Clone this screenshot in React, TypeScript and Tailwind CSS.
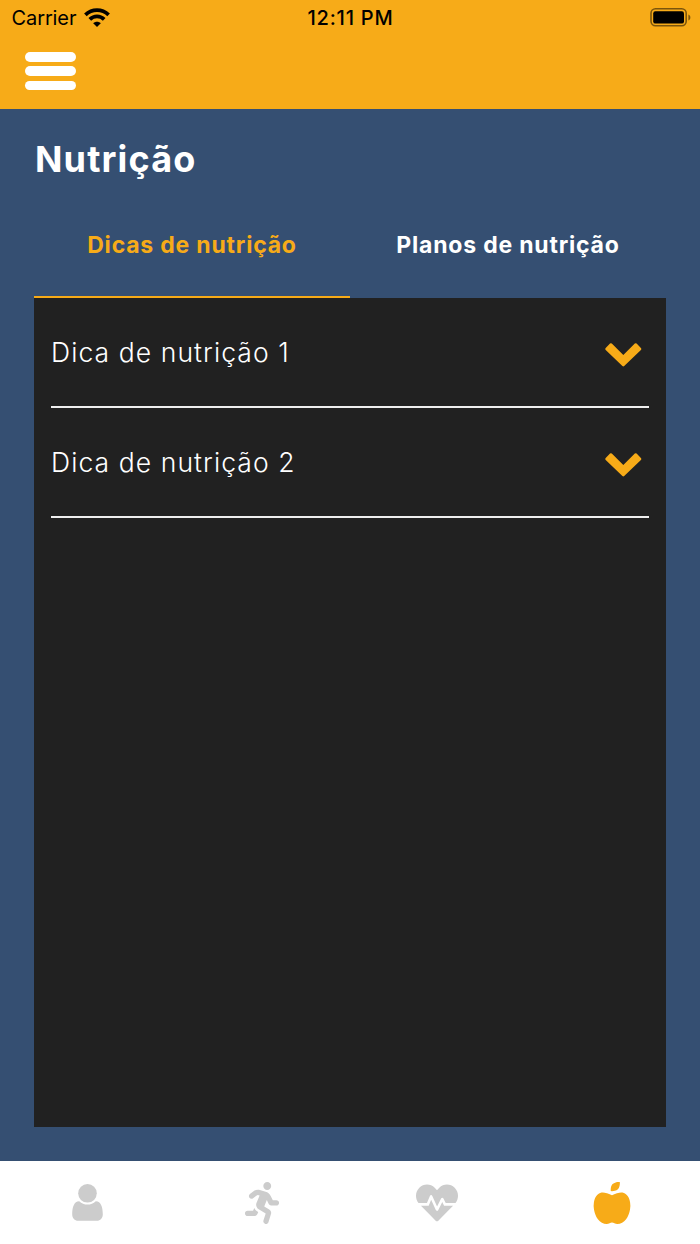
import { useState } from 'react';
import { FaAppleAlt, FaHeartbeat, FaRunning } from 'react-icons/fa';

const TABS = ['Dicas de nutrição', 'Planos de nutrição'];
const TIPS = ['Dica de nutrição 1', 'Dica de nutrição 2'];

function WifiIcon() {
  return (
    <svg width="26" height="20" viewBox="0 0 26 20" fill="none" stroke="black" strokeWidth="3.8">
      <path d="M1.4 6.8C8 .6 18 .6 24.6 6.8" />
      <path d="M5.8 11.4c4.2-4 10.2-4 14.4 0" />
      <path d="M13 19 9.2 15.2c2.2-2 5.4-2 7.6 0z" fill="black" stroke="none" />
    </svg>
  );
}

function BatteryIcon() {
  return (
    <svg width="42" height="20" viewBox="0 0 42 20">
      <rect x="1" y="0.8" width="35.2" height="17" rx="4.5" fill="none" stroke="black" strokeOpacity="0.5" strokeWidth="1.6" />
      <rect x="3.2" y="3.2" width="30.8" height="12.4" rx="2.2" fill="black" />
      <path d="M38.4 6.4c2.6 1 2.6 5 0 6z" fill="black" fillOpacity="0.5" />
    </svg>
  );
}

function ChevronIcon() {
  return (
    <svg width="37" height="24" viewBox="0 0 37 24" fill="#f7ab18">
      <path d="M17.4 23.1.7 6.9a1.3 1.3 0 0 1 0-1.8L5 .6a1.3 1.3 0 0 1 1.8 0L18.3 11.9 29.8.6a1.3 1.3 0 0 1 1.8 0l4.3 4.5a1.3 1.3 0 0 1 0 1.8L19.2 23.1a1.3 1.3 0 0 1-1.8 0z" />
    </svg>
  );
}

function UserIcon() {
  return (
    <svg width="31" height="37" viewBox="0 0 31 37" fill="currentColor">
      <circle cx="15.5" cy="9.3" r="9.3" />
      <path d="M7.2 17.2c4.7 4.5 11.9 4.5 16.6 0 5.2.2 7 5.8 7 13.1 0 3.9-2.5 6.5-5.9 6.5H6.1C2.7 36.8.2 34.2.2 30.3.2 23 2 17.4 7.2 17.2z" />
    </svg>
  );
}

export default function App() {
  const [activeTab, setActiveTab] = useState(0);

  return (
    <div className="flex flex-col h-[1244px] w-[700px] overflow-hidden bg-[#354f72] font-['Inter',sans-serif]">
      {/* Header */}
      <header className="h-[109px] shrink-0 bg-[#f7ab18]">
        <div className="grid grid-cols-3 items-center h-[36px] pl-[11.5px] pr-[8.5px] text-black text-[20px]">
          <div className="flex items-center gap-2">
            <span className="tracking-[-0.1px]">Carrier</span>
            <WifiIcon />
          </div>
          <span className="text-center font-medium tracking-[0.8px] whitespace-nowrap -ml-[2px]">12:11 PM</span>
          <div className="flex justify-end">
            <BatteryIcon />
          </div>
        </div>
        <button className="flex flex-col gap-[4.5px] mt-4 ml-[25.4px] w-[51px]" aria-label="Menu">
          <span className="h-[9.8px] w-full rounded-full bg-white" />
          <span className="h-[9.8px] w-full rounded-full bg-white" />
          <span className="h-[9.8px] w-full rounded-full bg-white" />
        </button>
      </header>

      <main className="flex flex-col flex-1 px-[34px] pb-[34px]">
        <h1 className="mt-7 ml-px h-11 leading-[44px] text-[36px] font-bold tracking-[1.15px] text-white">Nutrição</h1>

        {/* Tabs */}
        <div className="flex mt-[11px] h-[106px]">
          {TABS.map((tab, i) => (
            <button
              key={tab}
              onClick={() => setActiveTab(i)}
              className={`flex-1 border-b-2 pt-[2px] text-[23px] font-bold tracking-[0.8px] whitespace-nowrap ${
                i === activeTab ? 'border-[#f7ab18] text-[#f7ab18]' : 'border-transparent text-white'
              }`}
            >
              {tab}
            </button>
          ))}
        </div>

        {/* Tips */}
        <div className="flex-1 bg-[#212121] px-[17px]">
          {TIPS.map(tip => (
            <div key={tip} className="flex items-center justify-between h-[110px] border-b-2 border-[#eeeeee] pt-[2px] pr-[7px]">
              <span className="text-[26.5px] font-light tracking-[1.08px] text-white">{tip}</span>
              <div className="pt-[4px]">
                <ChevronIcon />
              </div>
            </div>
          ))}
        </div>
      </main>

      {/* Bottom bar */}
      <nav className="grid grid-cols-4 items-center justify-items-center h-[83px] shrink-0 bg-white pr-px text-[#cccccc]">
        <UserIcon />
        <FaRunning size={42} />
        <FaHeartbeat size={42} />
        <FaAppleAlt size={42} className="text-[#f7ab18]" />
      </nav>
    </div>
  );
}
